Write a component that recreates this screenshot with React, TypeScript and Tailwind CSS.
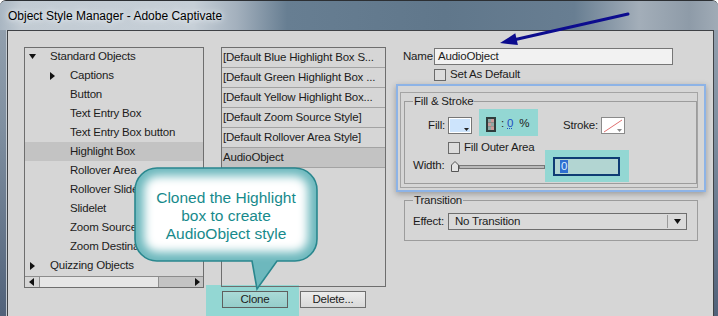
import React from "react";

const treeRows: { label: string; level: 0 | 1; arrow?: "down" | "right"; selected?: boolean }[] = [
  { label: "Standard Objects", level: 0, arrow: "down" },
  { label: "Captions", level: 1, arrow: "right" },
  { label: "Button", level: 1 },
  { label: "Text Entry Box", level: 1 },
  { label: "Text Entry Box button", level: 1 },
  { label: "Highlight Box", level: 1, selected: true },
  { label: "Rollover Area", level: 1 },
  { label: "Rollover Slide", level: 1 },
  { label: "Slidelet", level: 1 },
  { label: "Zoom Source", level: 1 },
  { label: "Zoom Destination", level: 1 },
  { label: "Quizzing Objects", level: 0, arrow: "right" },
];

const styles = [
  "[Default Blue Highlight Box S...",
  "[Default Green Highlight Box ...",
  "[Default Yellow Highlight Box...",
  "[Default Zoom Source Style]",
  "[Default Rollover Area Style]",
];

function Down() {
  return (
    <svg width="7" height="5" viewBox="0 0 7 5">
      <path d="M0,0 H7 L3.5,5 Z" fill="#111" />
    </svg>
  );
}
function Right() {
  return (
    <svg width="5" height="8" viewBox="0 0 5 8">
      <path d="M0,0 L5,4 L0,8 Z" fill="#111" />
    </svg>
  );
}
function Left() {
  return (
    <svg width="5" height="8" viewBox="0 0 5 8">
      <path d="M5,0 L0,4 L5,8 Z" fill="#111" />
    </svg>
  );
}

const CALLOUT =
  "M24,2 H162 A22,22 0 0 1 184,24 V73 A22,22 0 0 1 162,95 H144 L124,123 L119,95 H24 A22,22 0 0 1 2,73 V24 A22,22 0 0 1 24,2 Z";

export default function App() {
  return (
    <div className="relative w-[718px] h-[316px] overflow-hidden rounded-t-[6px] border-t border-[#2c2f33] bg-[linear-gradient(180deg,#97a4b1_0%,#7f8fa0_40%,#51627a_100%)] font-['Liberation_Sans',Arial,sans-serif] text-[11.5px] tracking-[-0.2px] text-[#1c1c1c]">
      {/* Title bar */}
      <div className="h-[29px] flex items-center pl-[8px] bg-[linear-gradient(90deg,#a9b6c2_0%,#c2cbd3_3%,#c6cfd7_27%,#a3b0bd_33%,#677e92_40%,#60778b_62%,#687e92_80%,#a3aeb9_89%,#8e9ba8_96%,#a0abb6_100%)]">
        <span className="text-[12px] tracking-normal text-black [text-shadow:0_0_8px_#e8edf1,0_0_4px_#e8edf1]">
          Object Style Manager - Adobe Captivate
        </span>
      </div>

      {/* Body */}
      <div className="flex h-[286px]">
        <div className="w-[7px] shrink-0 border-r border-[#c3cad1]" />
        <div className="w-[707px] shrink-0 border-l border-t border-r border-[#3f4246] bg-[#d6d6d6]">
          <div className="relative z-[2] flex items-start pl-[16px] pt-[16px]">
            {/* Tree panel */}
            <div className="w-[180px] h-[241px] border border-[#6e6e6e] flex flex-col overflow-hidden">
              <div className="-mt-[1px]">
                {treeRows.map((r) => (
                  <div
                    key={r.label}
                    className={`flex items-center h-[19px] whitespace-nowrap ${r.selected ? "bg-[#c3c3c3]" : ""}`}
                  >
                    {r.level === 0 && r.arrow === "down" && (
                      <span className="pl-[4px] mr-[14px] flex items-center"><Down /></span>
                    )}
                    {r.level === 0 && r.arrow === "right" && (
                      <span className="pl-[5px] mr-[15px] flex items-center"><Right /></span>
                    )}
                    {r.level === 1 && r.arrow === "right" && (
                      <span className="pl-[25px] mr-[15px] flex items-center"><Right /></span>
                    )}
                    {r.level === 1 && !r.arrow && <span className="w-[45px] shrink-0" />}
                    <span>{r.label}</span>
                  </div>
                ))}
              </div>
              <div className="mt-auto h-[11px] border-t border-[#8c8c8c] flex">
                <div className="w-[14px] flex items-center pl-[4px]"><Left /></div>
                <div className="w-[120px] h-full border-x border-[#8f8f8f] bg-[#e6e6e6]" />
                <div className="flex-1 bg-[#c3c3c3] flex items-center justify-end pr-[3px]"><Right /></div>
              </div>
            </div>

            {/* Styles list */}
            <div className="ml-[17px] w-[165px] flex flex-col">
              <div className="h-[240px] border border-[#6e6e6e] overflow-hidden">
                {styles.map((s) => (
                  <div key={s} className="h-[20px] leading-[19px] border-b border-[#a3a3a3] pl-[1px] whitespace-nowrap overflow-hidden">
                    {s}
                  </div>
                ))}
                <div className="h-[20px] leading-[19px] border-b border-[#a3a3a3] pl-[1px] bg-[#c3c3c3]">AudioObject</div>
              </div>
              <div className="mt-[4px] flex pl-[1px] gap-[12px]">
                <div className="w-[66px] h-[17px] border border-[#5f5f5f] bg-[linear-gradient(180deg,#aadad7,#95cdca)] flex items-center justify-center">
                  Clone
                </div>
                <div className="w-[66px] h-[17px] border border-[#6f6f6f] bg-[linear-gradient(180deg,#ececec,#d9d9d9)] flex items-center justify-center">
                  Delete...
                </div>
              </div>
            </div>

            {/* Right column */}
            <div className="ml-[4px] w-[322px] flex flex-col">
              <div className="mt-[1px] flex items-center h-[17px]">
                <span className="w-[44px] pl-[13px]">Name</span>
                <div className="w-[239px] h-[17px] border border-[#767676] bg-[#f2f2f2] pl-[3px] leading-[15px]">AudioObject</div>
              </div>
              <div className="mt-[4px] flex items-center h-[12px] pl-[44px]">
                <div className="w-[12px] h-[12px] border border-[#6a6a6a] bg-[#dcdcdc]" />
                <span className="ml-[4px]">Set As Default</span>
              </div>

              <div className="mt-[11px] ml-[10px] w-[298px] h-[96px] border border-[#a4a4a4] pt-[1px] pl-[3px]">
                <fieldset className="w-[293px] border border-[#9c9c9c] pl-[8px] pb-[1px]">
                  <legend className="px-[1px] leading-[14px]">Fill &amp; Stroke</legend>
                  <div className="mt-[1px] flex items-start h-[27px]">
                    <span className="w-[35px] h-[17px] mt-[8px] leading-[17px] text-right pr-[3px]">Fill:</span>
                    <div className="relative mt-[8px] w-[24px] h-[17px] border border-[#767676] bg-white p-[1px]">
                      <div className="w-full h-full bg-[#cde4fc]" />
                      <svg className="absolute right-[2px] bottom-[2px]" width="5" height="3" viewBox="0 0 5 3">
                        <path d="M0,0 H5 L2.5,3 Z" fill="#222" />
                      </svg>
                    </div>
                    <div className="ml-[7px] w-[59px] h-[27px] bg-[#93d7d3] flex items-center pl-[7px]">
                      <svg width="10" height="15" viewBox="0 0 10 15" className="mt-[3px]">
                        <rect x="0" y="0" width="10" height="15" fill="#2f3d3d" />
                        <rect x="2" y="2" width="3" height="3.6" fill="#8fa9a6" />
                        <rect x="5" y="2" width="3" height="3.6" fill="#c99a9a" />
                        <rect x="2" y="5.6" width="3" height="3.6" fill="#c99a9a" />
                        <rect x="5" y="5.6" width="3" height="3.6" fill="#8fa9a6" />
                        <rect x="2" y="9.2" width="3" height="3.8" fill="#8fa9a6" />
                        <rect x="5" y="9.2" width="3" height="3.8" fill="#c99a9a" />
                      </svg>
                      <span className="ml-[5px] mt-[2px]">:</span>
                      <span className="ml-[3px] mt-[2px] text-[#1f4fc4] underline decoration-dotted">0</span>
                      <span className="ml-[6px] mt-[2px]">%</span>
                    </div>
                    <span className="ml-[25px] w-[38px] mt-[8px] leading-[17px]">Stroke:</span>
                    <div className="relative mt-[8px] w-[24px] h-[17px] border border-[#8a8a8a] bg-white">
                      <svg className="absolute inset-0" width="22" height="15" viewBox="0 0 22 15">
                        <path d="M2,14 L20,2" stroke="#e07070" strokeWidth="1" />
                        <path d="M15,11 H20 L17.5,14 Z" fill="#8a8a8a" />
                      </svg>
                    </div>
                  </div>
                  <div className="mt-[6px] flex items-center h-[12px] pl-[35px]">
                    <div className="w-[12px] h-[12px] border border-[#6a6a6a] bg-[#dcdcdc]" />
                    <span className="ml-[4px]">Fill Outer Area</span>
                  </div>
                  <div className="-mt-[4px] flex items-center h-[32px]">
                    <span className="w-[38px]">Width:</span>
                    <svg width="8" height="11" viewBox="0 0 8 11" className="mt-[1px]">
                      <path d="M0.5,10.5 V4 L4,0.5 L7.5,4 V10.5 Z" fill="#e4e4e4" stroke="#555" />
                    </svg>
                    <div className="w-[86px] h-[4px] border border-[#777] bg-[#b9b9b9] mt-[1px]" />
                    <div className="w-[84px] h-[32px] bg-[#93d7d3] flex items-center pl-[8px]">
                      <div className="w-[67px] h-[19px] border-2 border-[#0f3c74] bg-[#b2d5d2] flex items-center pl-[5px]">
                        <span className="bg-[#2f6fd0] text-[#d8ecff] px-[1px] leading-[13px]">0</span>
                      </div>
                    </div>
                  </div>
                </fieldset>
              </div>

              <fieldset className="mt-[5px] ml-[14px] w-[294px] border border-[#9c9c9c] pl-[8px] pb-[10px]">
                <legend className="px-[1px] leading-[14px]">Transition</legend>
                <div className="mt-[6px] flex items-center h-[17px]">
                  <span className="w-[35px]">Effect:</span>
                  <div className="w-[239px] h-[17px] border border-[#6e6e6e] bg-[#dadada] flex items-center">
                    <span className="flex-1 pl-[6px]">No Transition</span>
                    <div className="w-px h-[13px] bg-[#9a9a9a]" />
                    <div className="w-[18px] flex items-center justify-center">
                      <svg width="7" height="5" viewBox="0 0 7 5">
                        <path d="M0,0 H7 L3.5,5 Z" fill="#111" />
                      </svg>
                    </div>
                  </div>
                </div>
              </fieldset>
            </div>
          </div>
        </div>
      </div>

      {/* Teal highlight behind Clone */}
      <div className="absolute left-[206px] top-[284px] w-[93px] h-[32px] bg-[#93d7d3] z-[1]" />

      {/* Blue highlight box */}
      <div className="absolute left-[396px] top-[83px] w-[310px] h-[108px] border-2 border-[#8db3e6] shadow-[0_2px_6px_rgba(0,0,0,0.28)] z-[3]" />

      {/* Callout */}
      <svg className="absolute left-[133px] top-[165px] z-[5]" width="190" height="126" viewBox="0 0 190 126">
        <defs>
          <clipPath id="calloutClip">
            <path d={CALLOUT} />
          </clipPath>
          <filter id="calloutBlur" x="-30%" y="-30%" width="160%" height="160%">
            <feGaussianBlur stdDeviation="5" />
          </filter>
        </defs>
        <path d={CALLOUT} fill="#6db8bd" />
        <g clipPath="url(#calloutClip)">
          <rect x="11" y="10" width="164" height="76" rx="14" fill="#ffffff" filter="url(#calloutBlur)" />
        </g>
        <path d={CALLOUT} fill="none" stroke="#2a878e" strokeWidth="1.6" />
      </svg>
      <div className="absolute left-[135px] top-[188px] w-[182px] z-[6] text-center text-[15.5px] leading-[18px] tracking-normal text-[#178a8c]">
        Cloned the Highlight
        <br />
        box to create
        <br />
        AudioObject style
      </div>

      {/* Arrow */}
      <svg className="absolute left-[495px] top-[8px] z-[7]" width="140" height="42" viewBox="0 0 140 42">
        <path d="M133,5 L21.6,30.2" stroke="#0c0c8e" strokeWidth="3" strokeLinecap="round" />
        <path d="M5,34 L22.9,36.05 L20.3,24.35 Z" fill="#0c0c8e" />
      </svg>
    </div>
  );
}
